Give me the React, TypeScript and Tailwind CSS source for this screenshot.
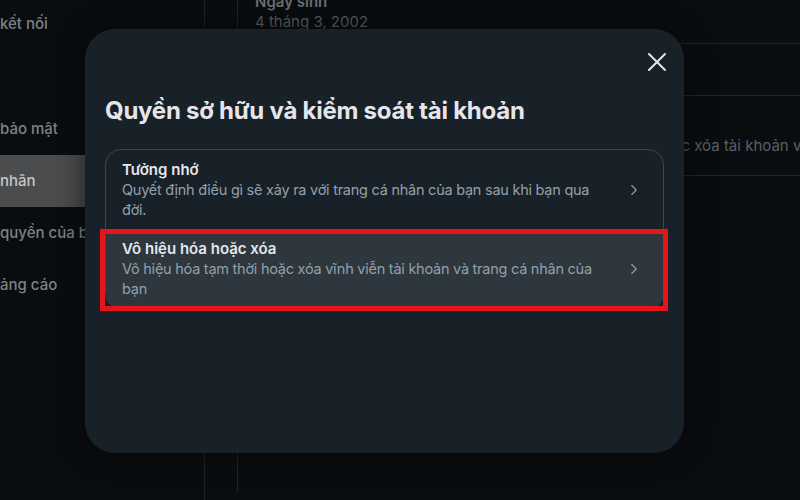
import { X, ChevronRight } from "lucide-react";

const sidebarItems = [
  { label: "kết nối" },
  { label: "bảo mật" },
  { label: "nhân", active: true },
  { label: "quyền của bạn" },
  { label: "ảng cáo" },
];

const options = [
  {
    title: "Tưởng nhớ",
    desc: "Quyết định điều gì sẽ xảy ra với trang cá nhân của bạn sau khi bạn qua đời.",
  },
  {
    title: "Vô hiệu hóa hoặc xóa",
    desc: "Vô hiệu hóa tạm thời hoặc xóa vĩnh viễn tài khoản và trang cá nhân của bạn",
    highlighted: true,
  },
];

export default function App() {
  return (
    <div
      className="relative w-[800px] h-[500px] overflow-hidden bg-[#0a0d10] flex"
      style={{ fontFamily: "Inter, 'Noto Sans', sans-serif" }}
    >
      {/* Sidebar */}
      <div className="w-[205px] shrink-0 border-r border-[#1f2327] flex flex-col">
        {sidebarItems.map((item, i) => (
          <div
            key={item.label}
            className={`flex items-center text-[15px] font-medium whitespace-nowrap overflow-hidden ${
              i === 0 ? "h-[48px] mb-[55px]" : "h-[52px]"
            } ${item.active ? "bg-[#4b4c4e] text-[#c6c7c9]" : "text-[#7e8185]"}`}
          >
            {item.label}
          </div>
        ))}
      </div>

      {/* Main content */}
      <div className="flex-1 pl-[32px]">
        <div className="border-l border-[#1f2327] h-full">
          <div className="border-b border-[#22272b] h-[52px] pl-[17px] -mt-[8px]">
            <div className="text-[15px] font-semibold text-[#6b7075] leading-[20px]">Ngày sinh</div>
            <div className="text-[15px] text-[#5a5f64] leading-[20px]">4 tháng 3, 2002</div>
          </div>
          <div className="border-b border-[#22272b] h-[52px]" />
          <div className="border-b border-[#22272b] h-[80px] pl-[17px] flex flex-col justify-center">
            <div className="text-[15px] font-semibold text-[#6b7075] leading-[20px]">
              Quyền sở hữu và kiểm soát tài khoản
            </div>
            <div className="-ml-[17px] text-[15px] text-[#5a5f64] leading-[20px] whitespace-nowrap">
              Quản lý dữ liệu của bạn, người liên hệ thừa kế, vô hiệu hóa hoặc xóa tài khoản và trang cá nhân.
            </div>
          </div>
        </div>
      </div>

      {/* Modal */}
      <div className="absolute left-[85px] top-[29px] w-[599px] h-[424px] rounded-[30px] bg-[#182127] shadow-[0_0_30px_rgba(0,0,0,0.6)] px-[20px]">
        <div className="flex justify-end pt-[17px] -mr-[9px]">
          <X className="w-[32px] h-[32px] text-[#e4e6eb]" strokeWidth={1.5} />
        </div>
        <h2 className="mt-[18px] text-[24px] font-bold text-[#e4e6eb] leading-[30px] tracking-[-0.25px]">
          Quyền sở hữu và kiểm soát tài khoản
        </h2>
        <div className="relative mt-[23px] rounded-[16px] border border-[#3b4650]">
          {options.map((opt) => (
            <div
              key={opt.title}
              className={`flex items-center h-[79px] pl-[16px] pr-[20px] ${
                opt.highlighted ? "bg-[#2d373d] rounded-b-[15px]" : ""
              }`}
            >
              <div className="flex-1 pr-[20px]">
                <div className="text-[15px] font-semibold text-[#e4e6eb] leading-[20px]">{opt.title}</div>
                <div className="text-[14.5px] tracking-[-0.25px] text-[#93a0ab] leading-[20px]">{opt.desc}</div>
              </div>
              <ChevronRight className="w-[18px] h-[18px] text-[#93a0ab]" strokeWidth={1.5} />
            </div>
          ))}
          {/* annotation box */}
          <div className="absolute left-[-6px] right-[-5px] top-[79px] bottom-[-3px] border-[5px] border-[#e8141c] pointer-events-none" />
        </div>
      </div>
    </div>
  );
}
